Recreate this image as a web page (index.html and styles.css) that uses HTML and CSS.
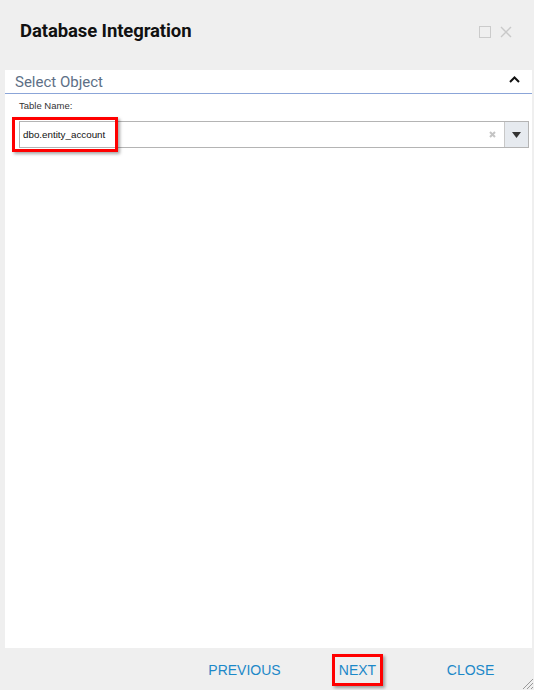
FILE: index.html
```html
<!DOCTYPE html>
<html>
<head>
<meta charset="utf-8">
<link rel="stylesheet" href="styles.css">
</head>
<body>
<div class="dialog">
  <header class="titlebar">
    <h1 class="title">Database Integration</h1>
    <div class="win-icons">
      <span class="icon-max"></span>
      <svg class="icon-close" width="12" height="12" viewBox="0 0 12 12"><path d="M1 1 L11 11 M11 1 L1 11" stroke="#c9c9c9" stroke-width="1.4" fill="none"/></svg>
    </div>
  </header>
  <main class="panel">
    <div class="section-head">
      <span class="section-title">Select Object</span>
      <svg class="chevron" width="11" height="7" viewBox="0 0 11 7"><path d="M1 6 L5.5 1.5 L10 6" stroke="#111" stroke-width="2" fill="none"/></svg>
    </div>
    <div class="field">
      <label class="field-label">Table Name:</label>
      <div class="select">
        <span class="select-value">dbo.entity_account</span>
        <svg class="clear" width="7" height="7" viewBox="0 0 7 7"><path d="M1 1 L6 6 M6 1 L1 6" stroke="#c4c4c4" stroke-width="2" fill="none"/></svg>
        <span class="select-btn"><svg width="9" height="6" viewBox="0 0 9 6"><path d="M0 0 H9 L4.5 6 Z" fill="#333"/></svg></span>
        <span class="highlight highlight-input"></span>
      </div>
    </div>
  </main>
  <footer class="footer">
    <button class="btn">PREVIOUS</button>
    <button class="btn"><span class="highlight-next">NEXT</span></button>
    <button class="btn">CLOSE</button>
    <svg class="resize" width="14" height="14" viewBox="0 0 14 14"><path d="M13 3 L3 13 M13 7 L7 13 M13 11 L11 13" stroke="#999" stroke-width="1" fill="none"/></svg>
  </footer>
</div>
</body>
</html>
```
FILE: styles.css
```css
* { box-sizing: border-box; }
html, body { margin: 0; padding: 0; }
body {
  background: #efefef;
  width: 534px;
  height: 690px;
  overflow: hidden;
  font-family: "Liberation Sans", Arial, sans-serif;
}
.dialog {
  display: flex;
  flex-direction: column;
  height: 690px;
  position: relative;
}
.titlebar {
  height: 70px;
  display: flex;
  align-items: flex-start;
  justify-content: space-between;
  padding: 19px 22px 0 20px;
}
.title {
  margin: 0;
  font-family: Roboto, "Liberation Sans", sans-serif;
  font-weight: 700;
  font-size: 18.5px;
  line-height: 24px;
  color: #111;
  letter-spacing: -0.1px;
}
.win-icons {
  display: flex;
  align-items: center;
  gap: 9px;
  margin-top: 7px;
}
.icon-max {
  display: block;
  width: 12px;
  height: 12px;
  border: 1.5px solid #cbcbcb;
}
.icon-close { display: block; }
.panel {
  height: 578px;
  margin: 0 2px 0 5px;
  background: #fff;
}
.section-head {
  height: 24px;
  border-bottom: 1.5px solid #8ba5d8;
  display: flex;
  align-items: center;
  justify-content: space-between;
  padding: 0 12px 0 10px;
}
.section-title {
  font-family: Roboto, "Liberation Sans", sans-serif;
  font-size: 15px;
  color: #5d6f86;
  line-height: 20px;
  margin-top: 1px;
}
.chevron { display: block; margin-top: -4px; }
.field {
  padding: 6px 3px 0 14px;
}
.field-label {
  display: block;
  font-size: 9.5px;
  color: #333;
  line-height: 12px;
  height: 21px;
}
.select {
  position: relative;
  height: 27px;
  border: 1px solid #b4b4b4;
  display: flex;
  align-items: center;
  padding-left: 3px;
}
.select-value {
  flex: 1;
  font-size: 9.8px;
  color: #111;
}
.clear { display: block; margin-right: 8px; }
.select-btn {
  width: 24px;
  height: 25px;
  background: #e6eaef;
  border-left: 1px solid #c8c8c8;
  display: flex;
  align-items: center;
  justify-content: center;
}
.select-btn svg { display: block; }
.highlight-input {
  position: absolute;
  left: -8px;
  top: -5px;
  width: 106px;
  height: 35px;
  border: 3px solid #f00;
  box-shadow: 2px 2px 3px rgba(0,0,0,0.35);
  pointer-events: none;
}
.footer {
  flex: 1;
  display: flex;
  justify-content: flex-end;
  align-items: center;
  padding: 2px 7px 0 0;
  position: relative;
}
.btn {
  width: 113px;
  background: none;
  border: 0;
  padding: 0;
  font-family: "Liberation Sans", Arial, sans-serif;
  font-size: 14px;
  color: #1c88c8;
  text-align: center;
  line-height: 16px;
}
.highlight-next {
  display: inline-block;
  border: 3px solid #f00;
  padding: 5px 4px 5px 4px;
  box-shadow: 2px 2px 3px rgba(0,0,0,0.35);
}
.resize {
  position: absolute;
  right: 0;
  bottom: 0;
}
```
